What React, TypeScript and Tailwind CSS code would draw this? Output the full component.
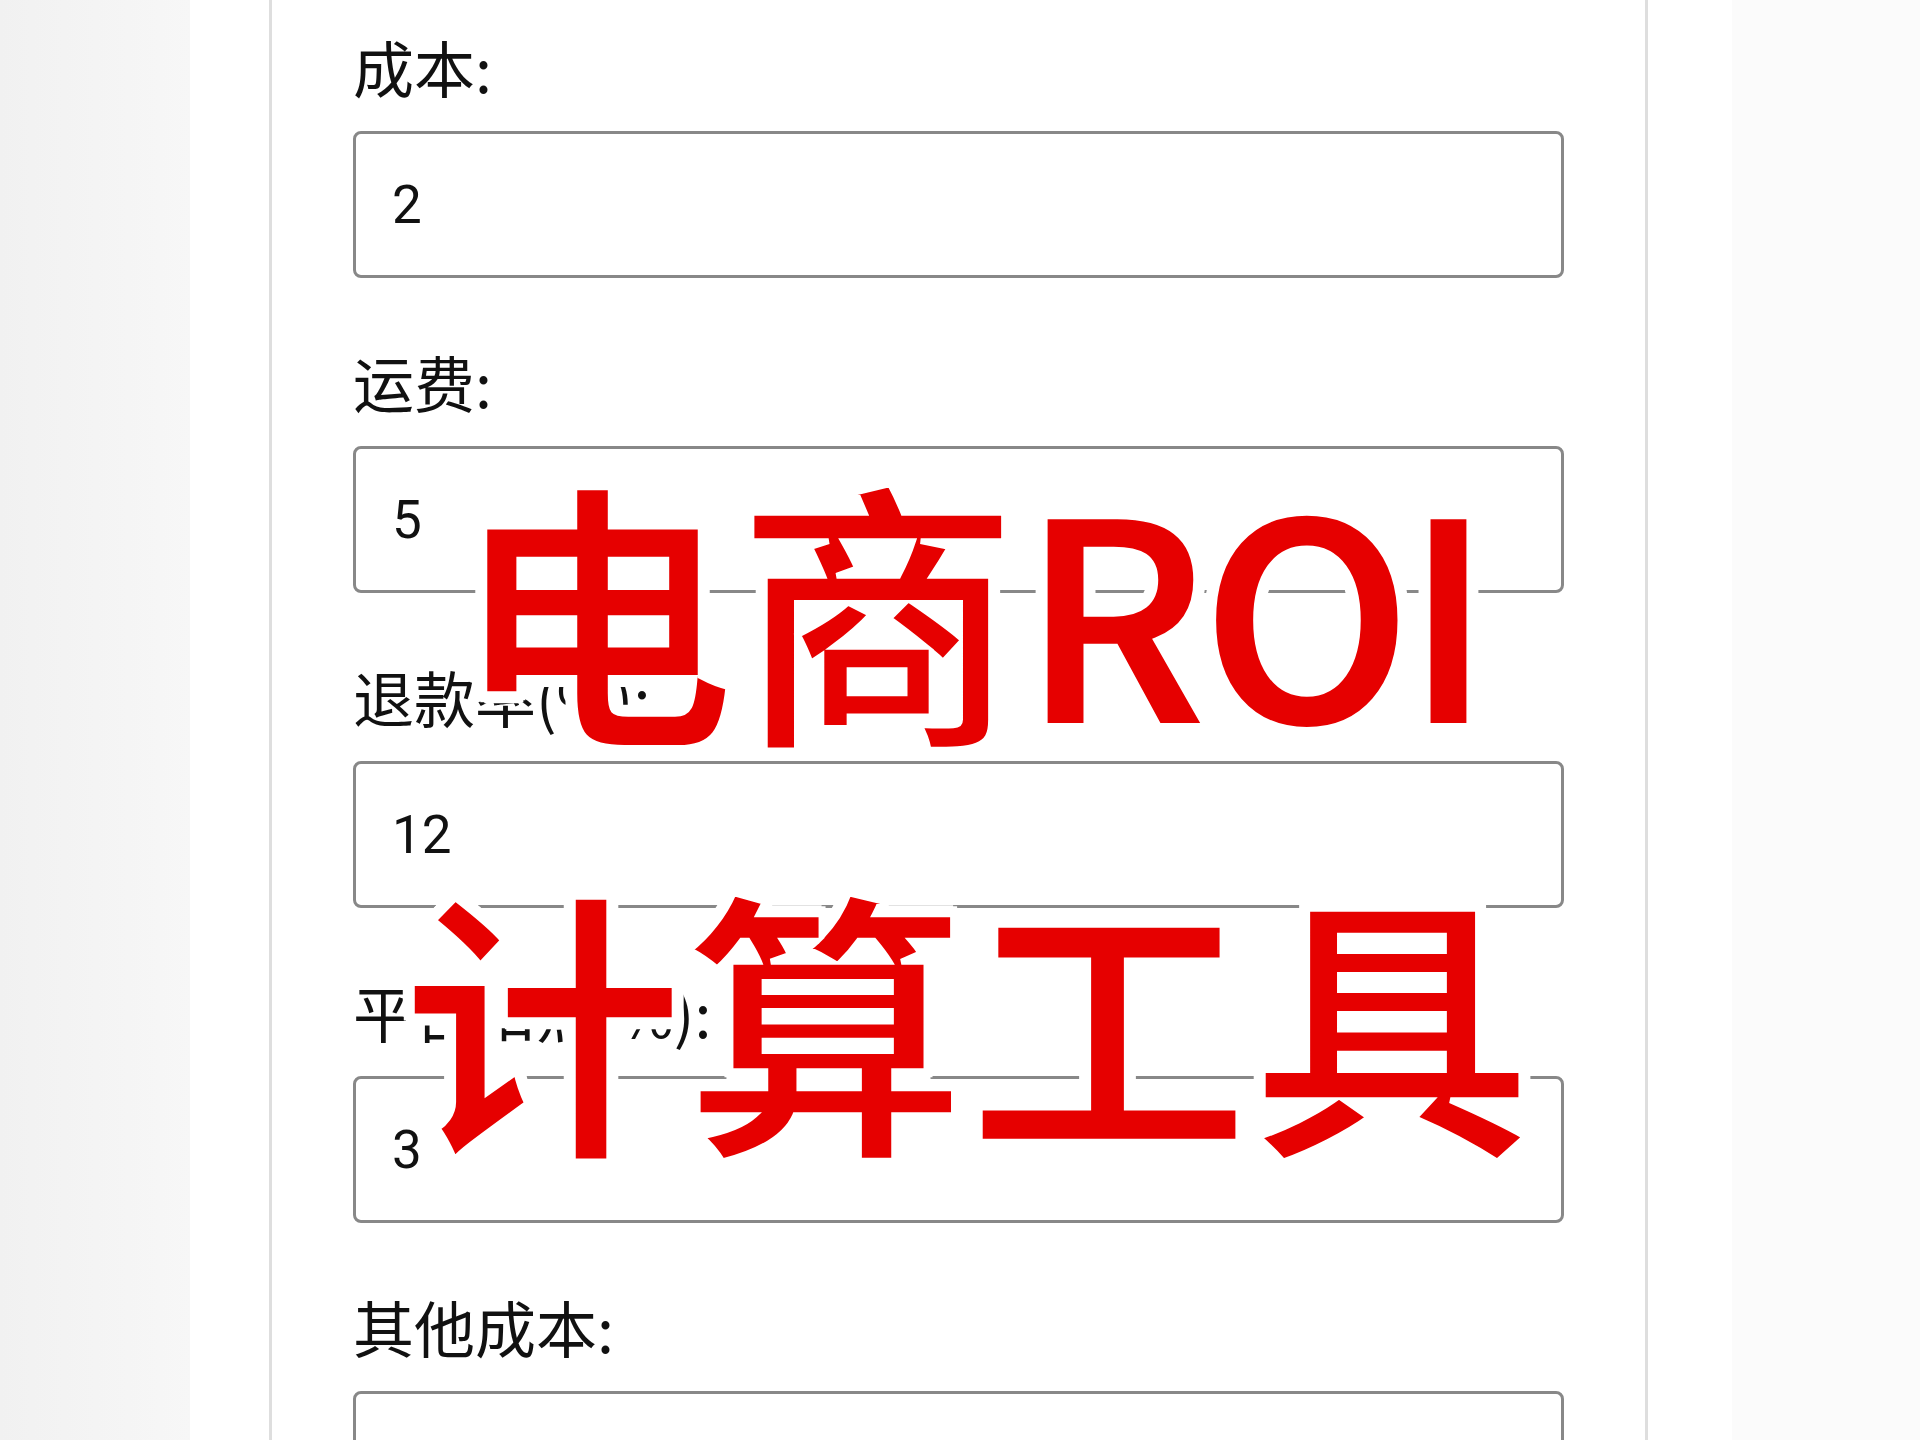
import React from "react";

const FIELDS = [
  { label: "成本:", value: "2" },
  { label: "运费:", value: "5" },
  { label: "退款率(%):", value: "12" },
  { label: "平台扣点(%):", value: "3" },
  { label: "其他成本:", value: "" },
];

export default function App() {
  return (
    <div className="relative flex h-[1440px] w-[1920px] overflow-hidden bg-white font-['Noto_Sans_CJK_SC',sans-serif]">
      {/* blurred backdrop edges */}
      <div className="w-[190px] shrink-0 bg-gradient-to-r from-[#f1f1f1] to-[#f7f7f7]" />
      <div className="w-[79px] shrink-0 bg-white" />

      {/* form card */}
      <div className="w-[1379px] shrink-0 border-x-[3px] border-[#dedede] bg-white px-[81px] pt-[22px]">
        {FIELDS.map((f) => (
          <div key={f.label} className="mb-[59px]">
            <label className="block text-[61px] leading-[90px] text-[#111]">{f.label}</label>
            <input
              readOnly
              value={f.value}
              className="mt-[19px] block h-[147px] w-full rounded-[8px] border-[3px] border-[#888] bg-white px-[36px] font-['Roboto',sans-serif] text-[53px] text-[#111] outline-none"
            />
          </div>
        ))}
      </div>

      <div className="w-[84px] shrink-0 bg-white" />
      <div className="flex-1 bg-[#fbfbfb]" />

      {/* title overlay: white halo via shadows, thin white stroke trims the glyph weight */}
      <div className="absolute left-[967px] top-[399px] -translate-x-1/2 whitespace-nowrap text-center font-['Noto_Sans_CJK_SC',sans-serif] text-[283px] font-bold leading-[1.448] text-[#e60000] [-webkit-text-stroke:6px_#fff] [text-shadow:9px_0_0_#fff,-9px_0_0_#fff,0_9px_0_#fff,0_-9px_0_#fff,6px_6px_0_#fff,-6px_6px_0_#fff,6px_-6px_0_#fff,-6px_-6px_0_#fff,8px_4px_0_#fff,-8px_4px_0_#fff,8px_-4px_0_#fff,-8px_-4px_0_#fff,4px_8px_0_#fff,-4px_8px_0_#fff,4px_-8px_0_#fff,-4px_-8px_0_#fff]">
        <div>
          电商<span className="tracking-[-14px]">ROI</span>
        </div>
        <div>计算工具</div>
      </div>
    </div>
  );
}
